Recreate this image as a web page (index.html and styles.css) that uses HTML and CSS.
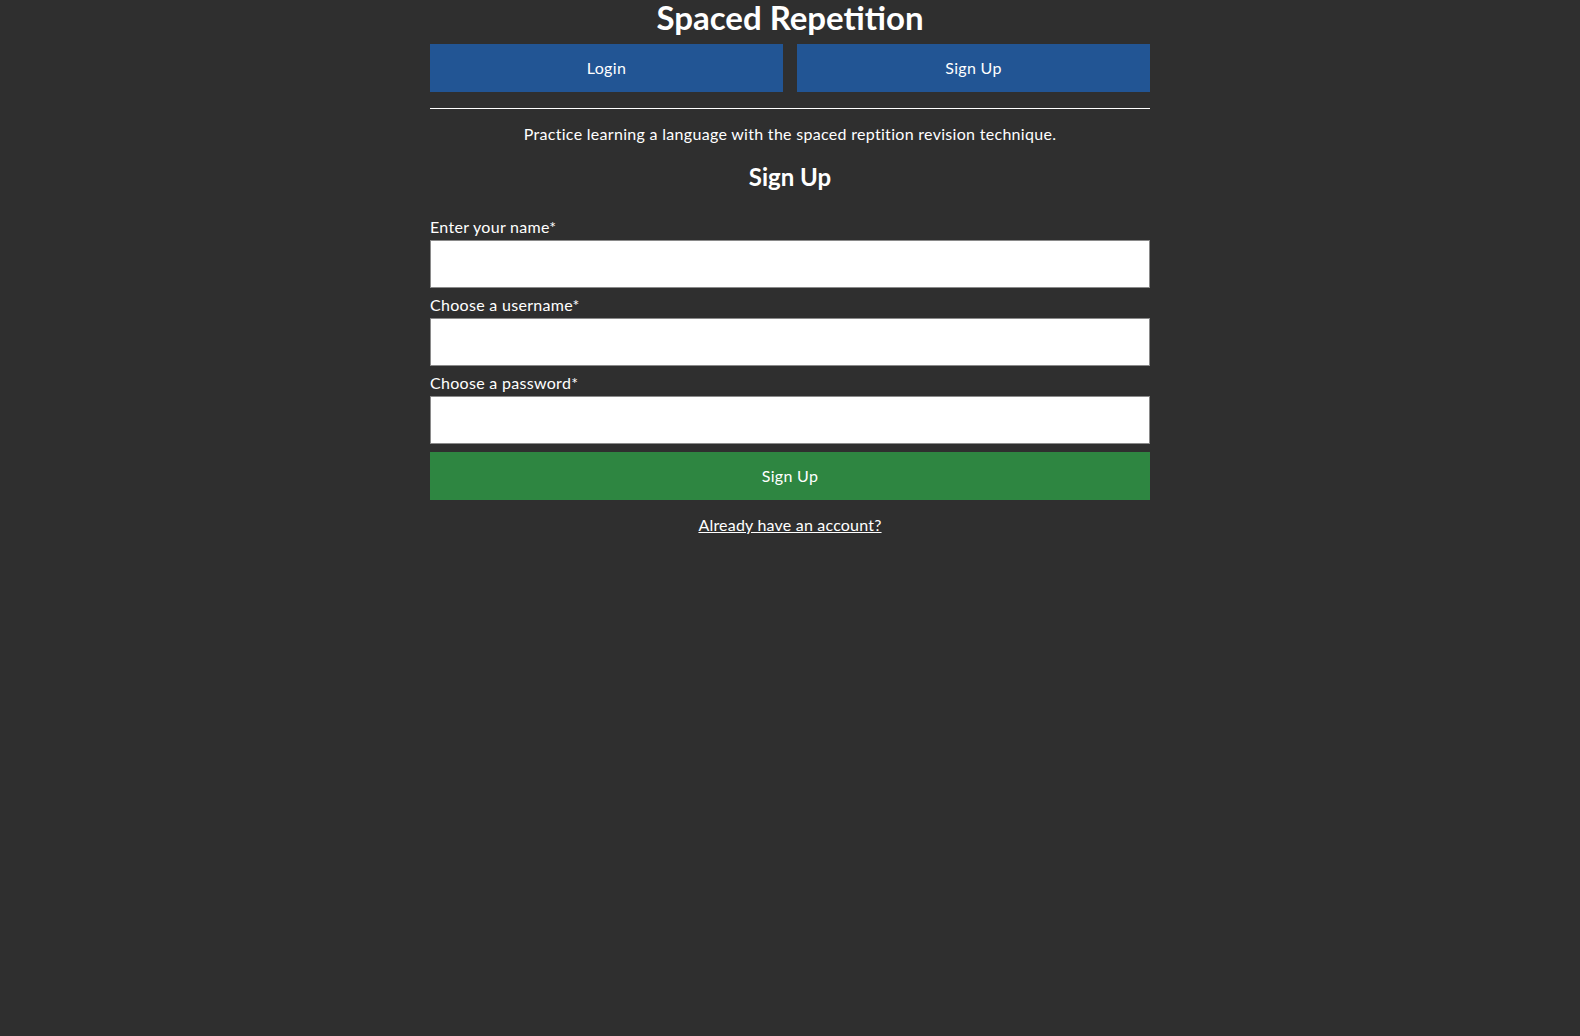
FILE: index.html
```html
<!DOCTYPE html>
<html lang="en">
<head>
<meta charset="utf-8">
<title>Spaced Repetition</title>
<link rel="stylesheet" href="styles.css">
</head>
<body>
<main class="container">
  <h1 class="title">Spaced Repetition</h1>
  <nav class="nav">
    <a class="nav-btn" href="#">Login</a>
    <a class="nav-btn" href="#">Sign Up</a>
  </nav>
  <hr class="rule">
  <p class="intro">Practice learning a language with the spaced reptition revision technique.</p>
  <h2 class="form-title">Sign Up</h2>
  <form class="form">
    <label class="label" for="name">Enter your name*</label>
    <input class="input" id="name" type="text">
    <label class="label" for="username">Choose a username*</label>
    <input class="input" id="username" type="text">
    <label class="label" for="password">Choose a password*</label>
    <input class="input" id="password" type="password">
    <button class="submit" type="button">Sign Up</button>
  </form>
  <p class="switch"><a href="#">Already have an account?</a></p>
</main>
</body>
</html>
```
FILE: styles.css
```css
html, body {
  margin: 0;
  padding: 0;
  background: #2f2f2f;
  color: #ffffff;
  font-family: "Lato", "Liberation Sans", sans-serif;
  font-size: 16px;
}
.container {
  width: 720px;
  margin: 0 auto;
  display: flex;
  flex-direction: column;
}
.title {
  margin: 0;
  font-size: 33px;
  line-height: 35px;
  font-weight: 700;
  text-align: center;
}
.nav {
  margin-top: 9px;
  display: flex;
  gap: 14px;
}
.nav-btn {
  flex: 1;
  height: 48px;
  display: flex;
  align-items: center;
  justify-content: center;
  padding-bottom: 2px;
  box-sizing: border-box;
  background: #225594;
  color: #fff;
  text-decoration: none;
  font-size: 16px;
  letter-spacing: 0.3px;
}
.rule {
  margin: 16px 0 0;
  border: 0;
  height: 1px;
  background: #ffffff;
}
.intro {
  margin: 15px 0 0;
  line-height: 20px;
  text-align: center;
  letter-spacing: 0.3px;
}
.form-title {
  margin: 18px 0 0;
  font-size: 24px;
  line-height: 30px;
  text-align: center;
}
.form {
  margin-top: 25px;
  display: flex;
  flex-direction: column;
}
.label {
  line-height: 20px;
  margin-bottom: 3px;
  letter-spacing: 0.3px;
}
.input {
  box-sizing: border-box;
  height: 48px;
  margin: 0 0 7px;
  border: 1px solid #8a8a8a;
  background: #fff;
  font-size: 16px;
}
.submit {
  margin-top: 1px;
  height: 48px;
  padding-bottom: 2px;
  border: 0;
  background: #2e8641;
  color: #fff;
  font-family: inherit;
  font-size: 16px;
  letter-spacing: 0.3px;
}
.switch {
  margin: 15px 0 0;
  line-height: 20px;
  text-align: center;
  letter-spacing: 0.2px;
}
.switch a {
  color: #fff;
  text-decoration: underline;
}
```
